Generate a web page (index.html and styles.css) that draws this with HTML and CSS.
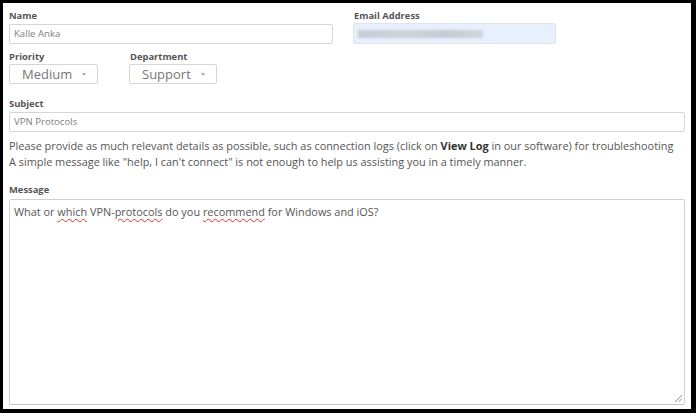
FILE: index.html
```html
<!DOCTYPE html>
<html lang="en">
<head>
    <meta charset="UTF-8">
    <title>Submit a Ticket</title>
    <link rel="stylesheet" href="styles.css">
</head>
<body>
    <form class="ticket-form">
        <div class="row">
            <div class="field field-name">
                <label>Name</label>
                <div class="input">Kalle Anka</div>
            </div>
            <div class="field field-email">
                <label>Email Address</label>
                <div class="input input-autofill"><span class="masked"></span></div>
            </div>
        </div>

        <div class="row row-selects">
            <div class="field field-priority">
                <label>Priority</label>
                <div class="select">Medium <span class="caret"></span></div>
            </div>
            <div class="field field-department">
                <label>Department</label>
                <div class="select">Support <span class="caret"></span></div>
            </div>
        </div>

        <div class="field field-subject">
            <label>Subject</label>
            <div class="input">VPN Protocols</div>
        </div>

        <p class="hint">
            Please provide as much relevant details as possible, such as connection logs (click on <strong>View Log</strong> in our software) for troubleshooting<br>
            A simple message like "help, I can't connect" is not enough to help us assisting you in a timely manner.
        </p>

        <div class="field field-message">
            <label>Message</label>
            <div class="textarea">
                What or <span class="typo">which</span> VPN-<span class="typo">protocols</span> do you <span class="typo">recommend</span> for Windows and iOS?
                <svg class="grip" width="9" height="9" viewBox="0 0 9 9">
                    <path d="M8 1 L1 8 M8 4.5 L4.5 8" stroke="#999" stroke-width="1"/>
                </svg>
            </div>
        </div>
    </form>
</body>
</html>
```

FILE: styles.css
```css
html, body {
    margin: 0;
    height: 100%;
}

body {
    background: #000;
    padding: 3px 5px 4px 3px;
    box-sizing: border-box;
    font-family: "Open Sans", sans-serif;
    color: #555;
}

.ticket-form {
    background: #fff;
    height: 100%;
    box-sizing: border-box;
    padding: 7px 6px 0 6px;
}

.row {
    display: flex;
}

.field label {
    display: block;
    font-size: 9.4px;
    font-weight: bold;
    line-height: 12px;
    color: #555;
    margin-bottom: 2px;
}

.field-name {
    width: 324px;
    margin-right: 20px;
}

.field-email {
    width: 203px;
}

.field-email label {
    padding-left: 1px;
}

.input {
    height: 20px;
    box-sizing: border-box;
    border: 1px solid #d6d6d6;
    border-radius: 2px;
    padding: 0 4px;
    font-size: 9.6px;
    line-height: 18px;
    color: #808080;
}

.input-autofill {
    background: #e8f0fe;
    border-color: #dde4ee;
    margin-top: -1px;
    height: 21px;
    padding-top: 6px;
}

.masked {
    display: block;
    width: 125px;
    height: 8px;
    background: linear-gradient(90deg, #c8ccd6, #cfd3db 40%, #c6cad3 70%, #d2d6de);
    filter: blur(1px);
}

.row-selects {
    margin-top: 7px;
}

.row-selects .field label {
    margin-bottom: 1px;
}

.field-priority {
    width: 121px;
}

.select {
    display: flex;
    align-items: center;
    height: 20px;
    box-sizing: border-box;
    border: 1px solid #d6d6d6;
    border-radius: 2px;
    padding: 0 11px 0 12px;
    font-size: 13px;
    color: #777;
}

.field-priority .select {
    width: 89px;
}

.field-department .select {
    width: 88px;
    margin-left: -1px;
}

.caret {
    margin-left: auto;
    width: 0;
    height: 0;
    border-left: 2px solid transparent;
    border-right: 2px solid transparent;
    border-top: 3px solid #aaa;
}

.field-subject {
    margin-top: 14px;
}

.hint {
    margin: 6px 0 0;
    font-size: 10.9px;
    line-height: 16px;
    color: #555;
}

.hint strong {
    color: #333;
}

.field-message {
    margin-top: 14px;
}

.field-message label {
    margin-bottom: 3px;
}

.textarea {
    position: relative;
    height: 206px;
    box-sizing: border-box;
    border: 1px solid #d0d0d0;
    border-bottom-color: #c4c4c4;
    border-radius: 2px;
    padding: 4px 4px;
    font-size: 10.9px;
    line-height: 16px;
    color: #555;
}

.typo {
    text-decoration: underline wavy #e03030;
    text-decoration-thickness: 1px;
    text-underline-offset: 2px;
}

.grip {
    position: absolute;
    right: 1px;
    bottom: 1px;
}
```
